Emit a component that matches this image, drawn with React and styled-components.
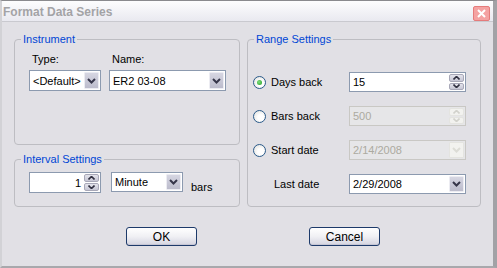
import styled, { createGlobalStyle } from "styled-components";

const GlobalStyle = createGlobalStyle`
    * { box-sizing: border-box; }
    body {
        margin: 0;
        font-family: "Liberation Sans", Arial, sans-serif;
        font-size: 11px;
        color: #000;
        background: #e1e0e5;
    }
`;

function Chevron() {
    return (
        <svg width="9" height="6" viewBox="0 0 9 6">
            <path d="M1 1 L4.5 4.5 L8 1" fill="none" stroke="currentColor" strokeWidth="2" />
        </svg>
    );
}

function Arrow({ up }) {
    return (
        <svg width="7" height="4" viewBox="0 0 7 4">
            <path d={up ? "M0.5 3.5 L3.5 0.5 L6.5 3.5" : "M0.5 0.5 L3.5 3.5 L6.5 0.5"} fill="none" stroke="currentColor" strokeWidth="1.6" />
        </svg>
    );
}

function Combo({ value, width, height = 21, disabled }) {
    return (
        <Box $width={width} $height={height} $disabled={disabled}>
            <Value $disabled={disabled}>{value}</Value>
            <DropButton $disabled={disabled}><Chevron /></DropButton>
        </Box>
    );
}

function Spinner({ value, width, height = 21, disabled, alignRight }) {
    return (
        <Box $width={width} $height={height} $disabled={disabled}>
            <Value $disabled={disabled} $right={alignRight}>{value}</Value>
            <SpinButtons>
                <SpinButton $disabled={disabled}><Arrow up /></SpinButton>
                <SpinButton $disabled={disabled}><Arrow /></SpinButton>
            </SpinButtons>
        </Box>
    );
}

export default function App() {
    return (
        <>
            <GlobalStyle />
            <Window>
                <TitleBar>
                    <Title>Format Data Series</Title>
                    <CloseButton>
                        <svg width="9" height="9" viewBox="0 0 9 9">
                            <path d="M1 1 L8 8 M8 1 L1 8" stroke="#fff" strokeWidth="2" />
                        </svg>
                    </CloseButton>
                </TitleBar>
                <Content>
                    <LeftColumn>
                        <Group $padding="7px 0 0 0" $height="112px">
                            <Legend>Instrument</Legend>
                            <FieldRow>
                                <Field>
                                    <FieldLabel>Type:</FieldLabel>
                                    <Combo value="<Default>" width="72px" />
                                </Field>
                                <Field>
                                    <FieldLabel>Name:</FieldLabel>
                                    <Combo value="ER2 03-08" width="117px" />
                                </Field>
                            </FieldRow>
                        </Group>
                        <Group $padding="6px 0 0 0" $grow>
                            <Legend>Interval Settings</Legend>
                            <IntervalRow>
                                <Spinner value="1" width="72px" alignRight />
                                <Combo value="Minute" width="72px" height={20} />
                                <BarsLabel>bars</BarsLabel>
                            </IntervalRow>
                        </Group>
                    </LeftColumn>
                    <Group $padding="25px 0 0 0">
                        <Legend>Range Settings</Legend>
                        <RangeList>
                            <RangeRow>
                                <RadioLabel><Radio $checked />Days back</RadioLabel>
                                <Spinner value="15" width="117px" height={20} />
                            </RangeRow>
                            <RangeRow>
                                <RadioLabel><Radio />Bars back</RadioLabel>
                                <Spinner value="500" width="117px" height={20} disabled />
                            </RangeRow>
                            <RangeRow>
                                <RadioLabel><Radio />Start date</RadioLabel>
                                <Combo value="2/14/2008" width="117px" height={20} disabled />
                            </RangeRow>
                            <RangeRow>
                                <RadioLabel $indent>Last date</RadioLabel>
                                <Combo value="2/29/2008" width="117px" height={20} />
                            </RangeRow>
                        </RangeList>
                    </Group>
                    <ButtonRow>
                        <PushButton>OK</PushButton>
                        <PushButton>Cancel</PushButton>
                    </ButtonRow>
                </Content>
            </Window>
        </>
    );
}

const Window = styled.div`
    width: 497px;
    height: 268px;
    background: #e1e0e5;
    border-top: 1px solid #8a8a8e;
    border-left: 2px solid #d2d2d6;
    border-right: 4px solid #a2a2a6;
    border-bottom: 2px solid #a8a8ac;
    display: flex;
    flex-direction: column;
`;

const TitleBar = styled.div`
    height: 21px;
    display: flex;
    align-items: center;
    justify-content: space-between;
    padding: 0 3px 0 1px;
    background: linear-gradient(#fdfdfe, #e9e9f0);
    border-bottom: 1px solid #c9c9cf;
`;

const Title = styled.span`
    font-size: 12px;
    font-weight: bold;
    color: #a3a3a6;
    padding-top: 1px;
`;

const CloseButton = styled.div`
    width: 17px;
    height: 15px;
    margin-top: 5px;
    background: #f4a2a2;
    border: 1px solid #e57b7b;
    border-radius: 2px;
    display: flex;
    align-items: center;
    justify-content: center;
`;

const Content = styled.div`
    display: grid;
    grid-template-columns: 226px 234px;
    column-gap: 7px;
    padding: 11px 0 0 12px;
`;

const LeftColumn = styled.div`
    display: flex;
    flex-direction: column;
    gap: 8px;
`;

const Group = styled.fieldset`
    margin: 0;
    min-width: 0;
    border: 1px solid #bdbdc2;
    border-radius: 4px;
    padding: ${(p) => p.$padding};
    height: ${(p) => p.$height || "auto"};
    flex: ${(p) => (p.$grow ? 1 : "none")};
`;

const Legend = styled.legend`
    color: #0046d5;
    padding: 0 2px;
    margin-left: 6px;
    line-height: 13px;
`;

const FieldRow = styled.div`
    display: flex;
    gap: 8px;
    padding-left: 14px;
`;

const Field = styled.div`
    display: flex;
    flex-direction: column;
    gap: 4px;
`;

const FieldLabel = styled.span`
    padding-left: 3px;
    line-height: 13px;
`;

const Box = styled.div`
    width: ${(p) => p.$width};
    height: ${(p) => p.$height}px;
    display: flex;
    align-items: stretch;
    background: ${(p) => (p.$disabled ? "#e6e6e8" : "#fff")};
    border: 1px solid ${(p) => (p.$disabled ? "#c9c8c4" : "#8c9aaf")};
    padding: 1px;
`;

const Value = styled.span`
    flex: 1;
    display: flex;
    align-items: center;
    justify-content: ${(p) => (p.$right ? "flex-end" : "flex-start")};
    padding: 0 3px 0 2px;
    font-size: 11px;
    color: ${(p) => (p.$disabled ? "#acaaa0" : "#000")};
    white-space: nowrap;
    overflow: hidden;
`;

const DropButton = styled.div`
    width: 15px;
    display: flex;
    align-items: center;
    justify-content: center;
    color: ${(p) => (p.$disabled ? "#dcdcd6" : "#36364a")};
    background: ${(p) => (p.$disabled ? "#f2f2ef" : "linear-gradient(#d6d6e2, #bcbccc)")};
    border: 1px solid ${(p) => (p.$disabled ? "#e4e4e0" : "#ececf2")};
    border-radius: 1px;
`;

const SpinButtons = styled.div`
    width: 15px;
    display: flex;
    flex-direction: column;
    gap: 1px;
`;

const SpinButton = styled.div`
    flex: 1;
    display: flex;
    align-items: center;
    justify-content: center;
    color: ${(p) => (p.$disabled ? "#d2d2cc" : "#303040")};
    background: ${(p) => (p.$disabled ? "#f2f2ef" : "linear-gradient(#e4e4ec, #c6c6d4)")};
    border: 1px solid ${(p) => (p.$disabled ? "#e4e4e0" : "#a8a8b8")};
    border-radius: 2px;
`;

const IntervalRow = styled.div`
    display: flex;
    align-items: flex-start;
    gap: 10px;
    padding: 0 0 13px 14px;
`;

const BarsLabel = styled.span`
    margin-left: -2px;
    padding-top: 9px;
    font-size: 11px;
`;

const RangeList = styled.div`
    display: flex;
    flex-direction: column;
    gap: 14px;
    padding: 1px 0 0 5px;
`;

const RangeRow = styled.div`
    display: flex;
    align-items: center;
`;

const RadioLabel = styled.label`
    width: 96px;
    display: flex;
    align-items: center;
    gap: 5px;
    padding-left: ${(p) => (p.$indent ? "21px" : "0")};
    font-size: 11px;
`;

const Radio = styled.span`
    width: 13px;
    height: 13px;
    border-radius: 50%;
    border: 1px solid #2a5a8a;
    background: radial-gradient(circle at 60% 60%, #ffffff 30%, #dcdcd8 100%);
    display: flex;
    align-items: center;
    justify-content: center;
    &::after {
        content: "";
        display: ${(p) => (p.$checked ? "block" : "none")};
        width: 5px;
        height: 5px;
        border-radius: 50%;
        background: radial-gradient(circle at 40% 40%, #7ee07e, #1f9a1f);
    }
`;

const ButtonRow = styled.div`
    grid-column: 1 / span 2;
    display: flex;
    gap: 112px;
    padding-left: 112px;
    margin-top: 20px;
`;

const PushButton = styled.button`
    width: 71px;
    height: 19px;
    padding: 0;
    font-family: "Liberation Sans", Arial, sans-serif;
    font-size: 12px;
    color: #000;
    border: 1px solid #1d3a6a;
    border-radius: 3px;
    background: linear-gradient(#ffffff, #f0f0f4 50%, #d4d4e0);
    box-shadow: inset 0 -1px 0 #c6c6d4;
`;
